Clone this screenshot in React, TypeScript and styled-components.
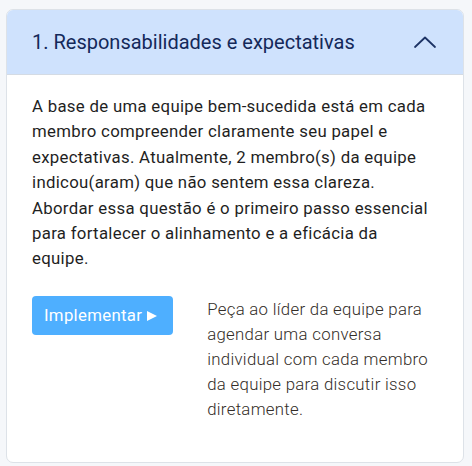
import React, { useState } from "react";
import styled, { createGlobalStyle } from "styled-components";

const GlobalStyle = createGlobalStyle`
  html, body {
    margin: 0;
    padding: 0;
    background: #f5f7fa;
  }
  body {
    font-family: Roboto, "Liberation Sans", Arial, sans-serif;
  }
`;

const Page = styled.div`
  padding: 9px 8px 6px 6px;
`;

const StyledCard = styled.div`
  width: 456px;
  background: #ffffff;
  border: 1px solid #dde2e8;
  border-radius: 7px;
  overflow: hidden;
`;

const StyledHeader = styled.button`
  display: flex;
  align-items: center;
  justify-content: space-between;
  width: 100%;
  height: 65px;
  padding: 0 26px 0 25px;
  background: #cfe2fd;
  border: none;
  border-bottom: 1px solid #d4dbe4;
  cursor: pointer;
  font-family: inherit;
  box-sizing: border-box;
`;

const StyledTitle = styled.span`
  font-size: 20px;
  font-weight: 400;
  color: #14295a;
`;

const StyledBody = styled.div`
  padding: 19px 28px 40px 25px;
`;

const StyledParagraph = styled.p`
  margin: 0;
  font-size: 16.8px;
  letter-spacing: 0.3px;
  line-height: 25.4px;
  color: #1f1f1f;
`;

const StyledActionRow = styled.div`
  display: flex;
  align-items: flex-start;
  gap: 34px;
  margin-top: 24px;
`;

const StyledButton = styled.button`
  flex-shrink: 0;
  display: flex;
  align-items: center;
  gap: 5px;
  height: 39px;
  padding: 0 16px 0 12px;
  background: #4eafff;
  color: #ffffff;
  border: none;
  border-radius: 4px;
  font-family: inherit;
  font-size: 16.8px;
  letter-spacing: 0.3px;
  cursor: pointer;
`;

const StyledArrow = styled.span`
  display: inline-block;
  width: 0;
  height: 0;
  margin-top: 2px;
  border-left: 10px solid #ffffff;
  border-top: 5px solid transparent;
  border-bottom: 5px solid transparent;
`;

const StyledHint = styled.p`
  margin: 0;
  padding-top: 1px;
  width: 230px;
  font-size: 16.8px;
  font-weight: 300;
  letter-spacing: 0.3px;
  line-height: 25px;
  color: #332d28;
`;

const Chevron: React.FC<{ open: boolean }> = ({ open }) => (
  <svg
    width="24"
    height="14"
    viewBox="0 0 24 14"
    fill="none"
    style={{ transform: open ? "none" : "rotate(180deg)" }}
  >
    <path
      d="M2 12 L12 2.5 L22 12"
      stroke="#1e3466"
      strokeWidth="1.8"
      strokeLinecap="round"
      strokeLinejoin="round"
    />
  </svg>
);

const App: React.FC = () => {
  const [open, setOpen] = useState(true);

  return (
    <Page>
      <GlobalStyle />
      <StyledCard>
        <StyledHeader onClick={() => setOpen(!open)}>
          <StyledTitle>1. Responsabilidades e expectativas</StyledTitle>
          <Chevron open={open} />
        </StyledHeader>
        {open && (
          <StyledBody>
            <StyledParagraph>
              A base de uma equipe bem-sucedida está em cada membro
              compreender claramente seu papel e expectativas. Atualmente, 2
              membro(s) da equipe indicou(aram) que não sentem essa clareza.
              Abordar essa questão é o primeiro passo essencial para
              fortalecer o alinhamento e a eficácia da equipe.
            </StyledParagraph>
            <StyledActionRow>
              <StyledButton>
                Implementar
                <StyledArrow />
              </StyledButton>
              <StyledHint>
                Peça ao líder da equipe para agendar uma conversa individual
                com cada membro da equipe para discutir isso diretamente.
              </StyledHint>
            </StyledActionRow>
          </StyledBody>
        )}
      </StyledCard>
    </Page>
  );
};

export default App;
